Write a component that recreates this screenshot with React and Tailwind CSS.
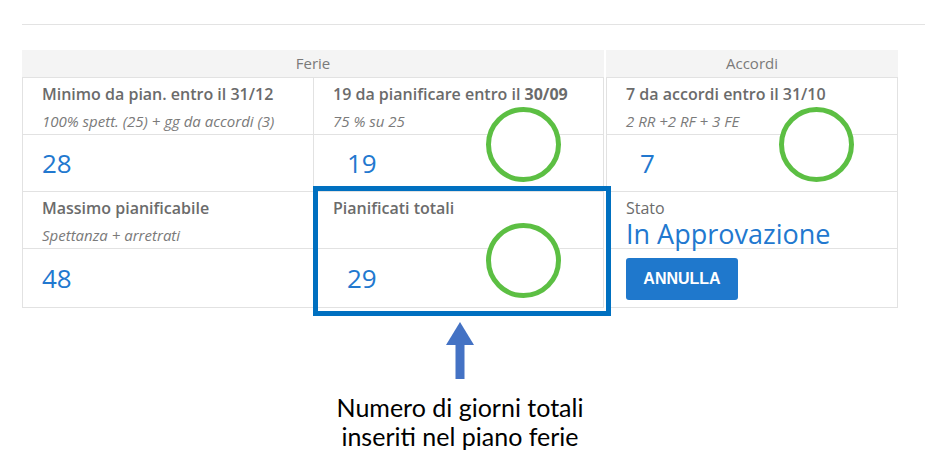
import React from "react";

const BORDER = "border-[#e2e2e2]";

function Circle({ className }) {
  return (
    <div
      className={`absolute w-[75px] h-[75px] rounded-full border-[5px] border-[#5cbf43] bg-white ${className}`}
    />
  );
}

function Cell({ title, sub, value, valueIndent = false, bottomH = "h-[56px]" }) {
  return (
    <div className={`border-r border-b ${BORDER} flex flex-col`}>
      <div className={`h-[57px] border-b ${BORDER} pl-[19px] pt-[5px]`}>
        <div className="text-[16px] leading-[22px] font-semibold text-[#6b6b6b] whitespace-nowrap">{title}</div>
        {sub && (
          <div className="text-[15px] leading-[20px] italic text-[#7a7a7a] mt-[6px] whitespace-nowrap">{sub}</div>
        )}
      </div>
      <div className={`${bottomH} flex items-center ${valueIndent ? "pl-[33px]" : "pl-[19px]"}`}>
        <span className="text-[26px] leading-[30px] text-[#2278cf]">{value}</span>
      </div>
    </div>
  );
}

export default function App() {
  return (
    <div className="relative w-[925px] h-[468px] bg-white overflow-hidden font-['Open_Sans',sans-serif]">
      <div className="pt-[24px] pl-[22px]">
        <div className="h-px bg-[#e3e3e3]" />
      </div>

      <div className="mt-[25px] ml-[22px] flex gap-[2px]">
        {/* Ferie */}
        <div className="w-[582px]">
          <div className="h-[27px] bg-[#f4f4f4] flex items-center justify-center text-[15px] text-[#7a7a7a]">
            Ferie
          </div>
          <div className={`grid grid-cols-[291px_290px] border-t border-l ${BORDER}`}>
            <Cell
              title="Minimo da pian. entro il 31/12"
              sub="100% spett. (25) + gg da accordi (3)"
              value="28"
            />
            <Cell
              title={
                <>
                  19 da pianificare entro il <span className="font-bold">30/09</span>
                </>
              }
              sub="75 % su 25"
              value="19"
              valueIndent
            />
            <Cell
              title="Massimo pianificabile"
              sub="Spettanza + arretrati"
              value="48"
              bottomH="h-[58px]"
            />
            <Cell title="Pianificati totali" value="29" valueIndent bottomH="h-[58px]" />
          </div>
        </div>

        {/* Accordi */}
        <div className="w-[292px]">
          <div className="h-[27px] bg-[#f4f4f4] flex items-center justify-center text-[15px] text-[#7a7a7a]">
            Accordi
          </div>
          <div className={`grid grid-cols-1 border-t border-l ${BORDER}`}>
            <Cell
              title="7 da accordi entro il 31/10"
              sub="2 RR +2 RF + 3 FE"
              value="7"
              valueIndent
            />
            <div className={`border-r border-b ${BORDER} flex flex-col`}>
              <div className={`h-[57px] border-b ${BORDER} pl-[19px] pt-[6px]`}>
                <div className="text-[16px] leading-[20px] text-[#6b6b6b]">Stato</div>
                <div className="text-[27px] leading-[30px] mt-[1px] text-[#2278cf] whitespace-nowrap">
                  In Approvazione
                </div>
              </div>
              <div className="h-[58px] pl-[19px] pt-[9px]">
                <button className="w-[112px] h-[42px] rounded-[3px] bg-[#1f78cc] text-white font-bold text-[16px] font-['Liberation_Sans',sans-serif]">
                  ANNULLA
                </button>
              </div>
            </div>
          </div>
        </div>
      </div>

      {/* annotations */}
      <Circle className="left-[486px] top-[107px]" />
      <Circle className="left-[779px] top-[107px]" />
      <div className="absolute left-[313px] top-[186px] w-[298px] h-[130px] border-[5px] border-[#0070c0]" />
      <Circle className="left-[486px] top-[223px]" />

      <svg className="absolute left-[440px] top-[318px]" width="40" height="64" viewBox="0 0 40 64">
        <polygon points="20,4 34,27 6,27" fill="#4472c4" />
        <rect x="15.5" y="26" width="9" height="35" fill="#4472c4" />
      </svg>

      <div className="absolute left-[300px] w-[320px] top-[393px] text-center font-['Lato',sans-serif] text-[25px] leading-[29px] text-black">
        <div>Numero di giorni totali</div>
        <div>inseriti nel piano ferie</div>
      </div>
    </div>
  );
}
